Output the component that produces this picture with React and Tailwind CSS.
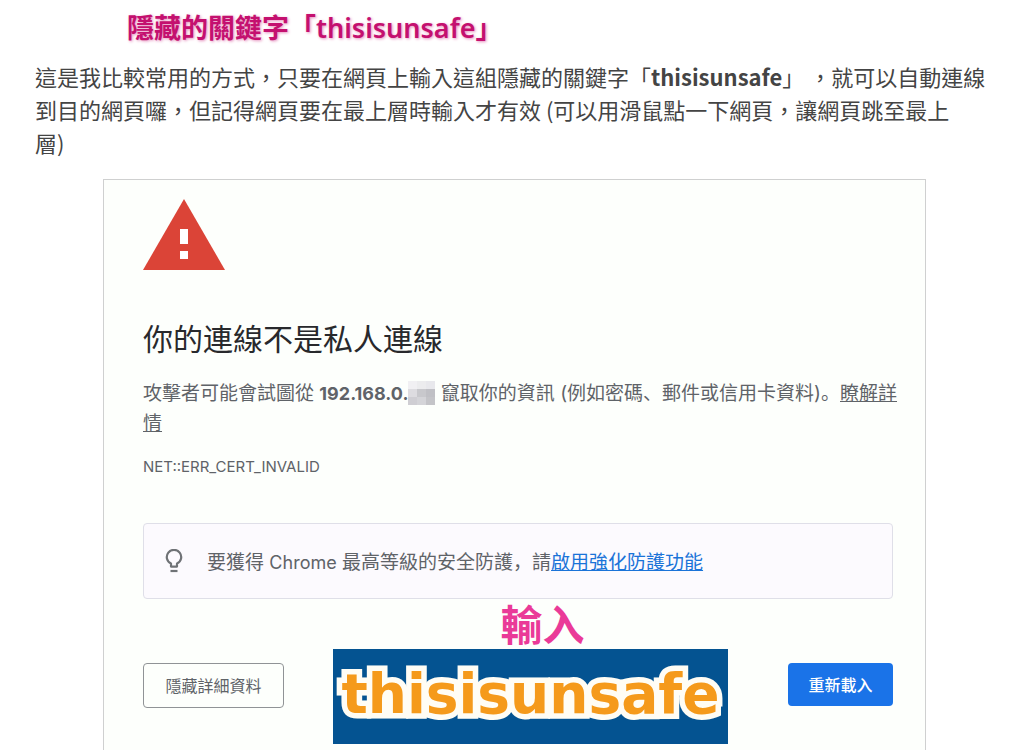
const MOSAIC = [
  "bg-[#f1f0f3]", "bg-[#ececee]", "bg-[#e8e8ec]",
  "bg-[#dddce0]", "bg-[#c8c8cc]", "bg-[#c0c0c5]",
  "bg-[#cfced3]", "bg-[#d4d4d8]", "bg-[#c4c4c8]",
];

function WarningIcon() {
  return (
    <svg viewBox="0 0 82 71" className="block h-[71px] w-[82px]" aria-hidden="true">
      <path d="M41 0 82 71H0Z" fill="#db4437" />
      <path d="M37 30h8v15h-8zM37 52h8v8h-8z" fill="#fff" />
    </svg>
  );
}

function BulbIcon() {
  return (
    <svg viewBox="0 0 18 24" className="block h-6 w-[18px] shrink-0" fill="none" stroke="#6f7276" strokeWidth="2.2" aria-hidden="true">
      <path d="M6 17.6v-3A7.2 7.2 0 1 1 12 14.6V17.6Z" strokeLinejoin="round" />
      <path d="M5.5 22h7" />
    </svg>
  );
}

export default function App() {
  return (
    <main className="bg-white text-[#444]" lang="zh-Hant">
      <h1 className="pt-2 pl-[127px] font-['Noto_Sans','Noto_Sans_CJK_TC',sans-serif] text-[27px] leading-10 font-semibold text-[#c4106f] [text-shadow:1px_1px_3px_#e58fbd]">
        隱藏的關鍵字「thisisunsafe」
      </h1>
      <p className="mt-3 pr-6 pl-[35px] font-['Noto_Sans_CJK_TC',sans-serif] text-[22px] leading-[33px]">
        這是我比較常用的方式，只要在網頁上輸入這組隱藏的關鍵字「<strong>thisisunsafe</strong>」 ，就可以自動連線<br />
        到目的網頁囉，但記得網頁要在最上層時輸入才有效 (可以用滑鼠點一下網頁，讓網頁跳至最上<br />
        層)
      </p>

      <section className="mt-5 mr-[93px] ml-[103px] border border-b-0 border-[#cfd0d0] bg-[#fdfffc] pt-[19px] pr-8 pb-2 pl-[39px] font-[Inter,'Noto_Sans_CJK_SC',sans-serif] text-[#5f6368]" lang="zh-Hans">
        <WarningIcon />
        <h2 className="mt-12 text-[30px] leading-[42px] text-[#28292c]">你的連線不是私人連線</h2>
        <p className="mt-[19px] text-[19px] leading-[30px] whitespace-nowrap">
          攻擊者可能會試圖從 <strong className="text-[18px] font-bold">192.168.0.</strong>
          <span className="-mt-1 inline-grid h-6 w-[27px] grid-cols-3 grid-rows-3 align-text-bottom">
            {MOSAIC.map((tone, i) => (
              <span key={i} className={tone} />
            ))}
          </span>{" "}
          竄取你的資訊 (例如密碼、郵件或信用卡資料)。<a href="#learn" className="underline">瞭解詳<br />情</a>
        </p>
        <p className="mt-4 text-[15px] leading-6">NET::ERR_CERT_INVALID</p>

        <div className="mt-11 flex h-[76px] items-center rounded-[4px] border border-[#dfdfe8] bg-[#fcfafe] pl-[21px] text-[19px]">
          <BulbIcon />
          <p className="ml-6 pt-1 whitespace-nowrap">
            要獲得 <span className="text-[18px]">Chrome</span> 最高等級的安全防護，請<a href="#protection" className="text-[#1a73d8] underline">啟用強化防護功能</a>
          </p>
        </div>

        <div className="flex items-start">
          <button type="button" className="mt-16 h-[45px] w-[141px] shrink-0 rounded-[4px] border border-[#909396] text-[16px]">
            隱藏詳細資料
          </button>
          <div className="ml-[49px] shrink-0 text-center">
            <p className="pt-1 pl-6 text-[42px] leading-[46px] font-bold text-[#ea3a98]">輸入</p>
            <p className="h-[95px] w-[395px] bg-[#045391] font-['DejaVu_Sans',sans-serif] text-[55px] leading-[90px] font-bold text-[#f59a1b] [-webkit-text-stroke:11px_#fffdf5] [paint-order:stroke_fill] [stroke-linejoin:round]">
              thisisunsafe
            </p>
          </div>
          <button type="button" className="mt-16 ml-auto h-[43px] w-[105px] shrink-0 rounded-[4px] bg-[#1a73e8] text-[16px] font-medium text-white">
            重新載入
          </button>
        </div>
      </section>
    </main>
  );
}
